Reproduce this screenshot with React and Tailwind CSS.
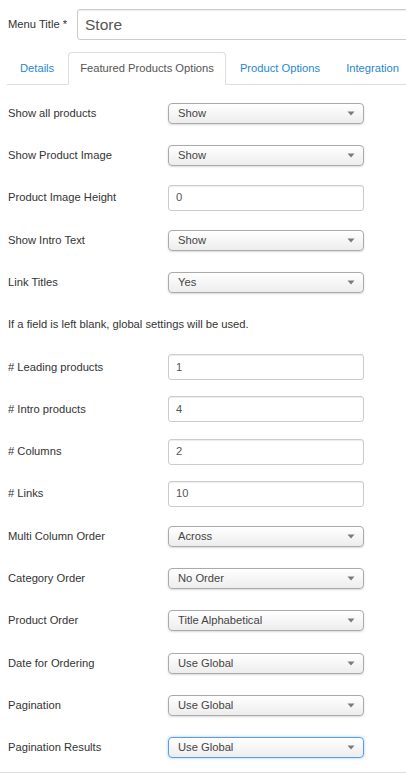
import React from "react";

const fields = [
  { label: "Show all products", type: "select", value: "Show" },
  { label: "Show Product Image", type: "select", value: "Show" },
  { label: "Product Image Height", type: "text", value: "0" },
  { label: "Show Intro Text", type: "select", value: "Show" },
  { label: "Link Titles", type: "select", value: "Yes" },
  { type: "note", label: "If a field is left blank, global settings will be used." },
  { label: "# Leading products", type: "text", value: "1" },
  { label: "# Intro products", type: "text", value: "4" },
  { label: "# Columns", type: "text", value: "2" },
  { label: "# Links", type: "text", value: "10" },
  { label: "Multi Column Order", type: "select", value: "Across" },
  { label: "Category Order", type: "select", value: "No Order" },
  { label: "Product Order", type: "select", value: "Title Alphabetical" },
  { label: "Date for Ordering", type: "select", value: "Use Global" },
  { label: "Pagination", type: "select", value: "Use Global" },
  { label: "Pagination Results", type: "select", value: "Use Global", focused: true },
];

function FakeSelect({ value, focused }) {
  return (
    <div
      className={
        "flex items-center justify-between shrink-0 w-[196px] h-[21px] pl-[9px] pr-[8px] rounded-[4px] bg-gradient-to-b from-white to-[#ededed] text-[#444] " +
        (focused
          ? "border border-[#5b9de8] shadow-[0_0_3px_rgba(82,168,236,0.6)]"
          : "border border-[#aaa] shadow-[0_1px_2px_rgba(0,0,0,0.15)]")
      }
    >
      <span className="whitespace-nowrap">{value}</span>
      <svg width="8" height="5" viewBox="0 0 8 5">
        <path d="M0.5 0.5 L7.5 0.5 L4 4.5 Z" fill="#7a7a7a" />
      </svg>
    </div>
  );
}

function TextBox({ value }) {
  return (
    <div className="flex items-center shrink-0 w-[196px] h-[26px] px-[7px] rounded-[3px] border border-[#ccc] bg-white text-[#555] shadow-[inset_0_1px_1px_rgba(0,0,0,0.075)]">
      {value}
    </div>
  );
}

export default function App() {
  return (
    <div
      className="w-[406px] h-[773px] overflow-hidden bg-white text-[11.2px] text-[#333]"
      style={{ fontFamily: '"Liberation Sans", Arial, sans-serif' }}
    >
      {/* Menu title */}
      <div className="flex items-center pt-[9px] pl-[8px]">
        <span className="w-[69px] shrink-0 whitespace-nowrap text-[#333]">Menu Title *</span>
        <div className="flex items-center h-[31px] w-[360px] shrink-0 pl-[7px] rounded-[3px] border border-[#ccc] text-[15.5px] text-[#555] shadow-[inset_0_1px_1px_rgba(0,0,0,0.075)]">
          Store
        </div>
      </div>

      {/* Tabs */}
      <div className="flex items-end ml-[7px] mt-[12px] h-[33px] border-b border-[#ddd] whitespace-nowrap">
        <div className="h-[32px] shrink-0 flex items-center pl-[13px] pr-[12px] mr-[2px] text-[#1f88cf]">
          Details
        </div>
        <div className="h-[33px] shrink-0 -mb-px flex items-center px-[11px] mr-[2px] border border-[#ddd] border-b-white rounded-t-[4px] bg-white text-[#555]">
          Featured Products Options
        </div>
        <div className="h-[32px] shrink-0 flex items-center px-[12px] mr-[2px] text-[#1f88cf]">
          Product Options
        </div>
        <div className="h-[32px] shrink-0 flex items-center px-[12px] text-[#1f88cf]">
          Integration
        </div>
      </div>

      {/* Fields */}
      <div className="pt-[7px] pl-[8px] border-b border-[#ddd]">
        {fields.map((f, i) => (
          <div key={i} className="flex items-center h-[42.3px]">
            {f.type === "note" ? (
              <span className="whitespace-nowrap">{f.label}</span>
            ) : (
              <>
                <span className="w-[160px] shrink-0 whitespace-nowrap">{f.label}</span>
                {f.type === "select" ? (
                  <FakeSelect value={f.value} focused={f.focused} />
                ) : (
                  <TextBox value={f.value} />
                )}
              </>
            )}
          </div>
        ))}
        <div className="h-[3px]" />
      </div>
    </div>
  );
}
